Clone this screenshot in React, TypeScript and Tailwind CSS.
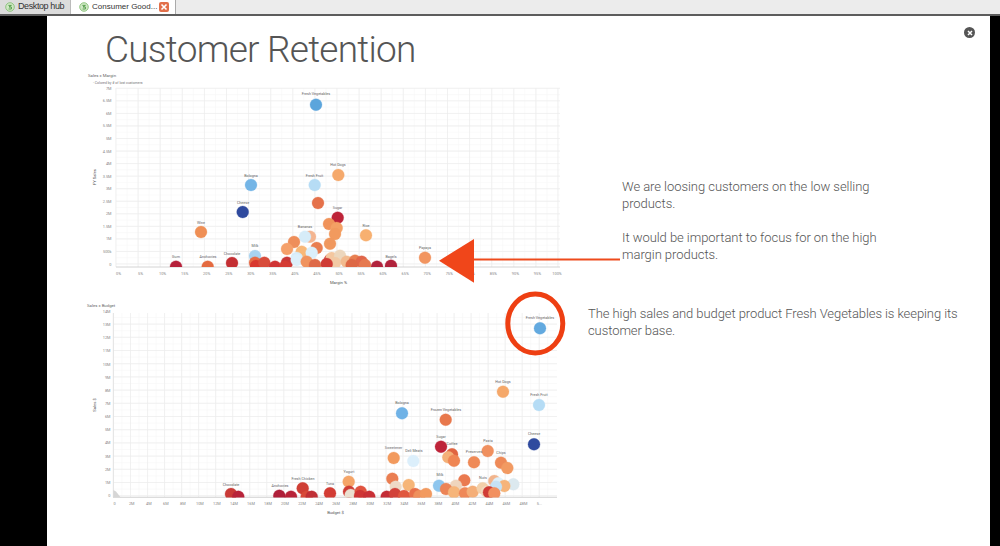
type B = [number, number, string, number?];
type L = [number, number, string];

const c1: B[] = [
  [316, 104.7, "#5ba5dc"], [251, 185, "#74b5e6"], [242.7, 212, "#2f4a9e"], [201, 232, "#ef8f55"], [314.7, 185, "#b6dcf5"],
  [338.3, 175, "#f5a96c"], [318, 203, "#e5714a"], [337.7, 217.7, "#bd2338"], [366, 235.3, "#f7b070"], [425, 257.7, "#f29560"],
  [377, 266.7, "#b1233c"], [391, 265.7, "#b1233c"],
  [329, 224, "#f0935a"], [336.7, 228, "#f4a064"], [335, 234, "#f29a5e"], [330, 243.7, "#f0985e"],
  [310, 236.7, "#f4b590"], [305, 236.7, "#d6ecf8"], [294, 242, "#ee8e5a"], [287, 249, "#f5a06a"], [316.7, 248, "#e97e50"],
  [301.7, 251.7, "#f8b878"], [311.7, 252.7, "#dbeffa"], [255, 256, "#a8d3f0"], [296.7, 258, "#d6ecf8"],
  [176, 266.7, "#b6203a"], [207.7, 266.7, "#e46a40"], [232, 263, "#c42f33"], [255, 262.7, "#e66a45"], [256, 266, "#d8382f"],
  [264.3, 262.7, "#d84c3b"], [275, 266.7, "#cf3434"], [287, 262.7, "#c83838"], [285, 266.7, "#d43c34"],
  [330, 260, "#cc3a33"], [331.7, 258, "#f4c79f"], [340, 255.7, "#ecd7bd"], [335, 263, "#f2c9a4"], [346.7, 261.7, "#f2bb8f"],
  [355, 260.7, "#e88052"], [361.7, 261.7, "#e0664a"], [351.7, 265, "#dd6845"], [365, 265, "#e67a50"], [326.7, 264, "#cf3c35"],
  [296.7, 260, "#dceffa"], [306.7, 261.7, "#f0935e"], [315, 265, "#de6a48"],
];
const l1: L[] = [
  [316, 95, "Fresh Vegetables"], [251, 176.5, "Bologna"], [243, 203.5, "Cheese"], [201, 223.5, "Wine"], [314.5, 176.5, "Fresh Fruit"],
  [338, 166, "Hot Dogs"], [337.5, 209, "Sugar"], [366, 226.5, "Rice"], [425, 249, "Papaya"], [391, 258, "Bagels"], [176, 258, "Gum"],
  [208, 258, "Anchovies"], [232, 254.5, "Chocolate"], [255, 247, "Milk"], [305, 228, "Bananas"],
];
const c2: B[] = [
  [231, 494, "#c93a36"], [238.3, 496.7, "#b8243a"], [279.3, 495.7, "#b0203a"], [291, 496.7, "#b92338"], [302.7, 488.3, "#cf3f35"],
  [306.7, 496.7, "#d84b3a"], [311.7, 496.7, "#c03036"], [330, 493.3, "#d33c34"],
  [540, 328.3, "#62a9df"], [503, 391.7, "#f5a86a"], [539, 405, "#b5dcf5"], [402, 413.3, "#6fb2e6"], [445.7, 419.7, "#e8784c"],
  [534, 444.3, "#2f4a9e"], [452, 454.3, "#e06440"], [441, 446.7, "#be2439"], [448.3, 457.3, "#f4b078"], [454, 460.7, "#ef8654"],
  [487.7, 451, "#f0905f"], [474, 462.3, "#ef8a57"], [501, 462.7, "#ee8a58"], [507.3, 468, "#f29a62"], [393.7, 458, "#f29a5e"],
  [413.3, 461, "#dceffb"], [348.7, 481.7, "#f5a568"], [392.3, 478.7, "#ea7e52"], [395.7, 486.7, "#eedac6"], [408.7, 485, "#f6b578"],
  [349, 491.7, "#cf3c35"], [350.7, 495, "#ebe0d0"], [360.7, 491.7, "#e0533f"], [360, 496, "#cf3535"], [369.3, 496.7, "#c93036"],
  [386.7, 496.7, "#c42c36"], [395, 494, "#d2423a"], [404, 496, "#e0583f"], [415, 494, "#e8704a"], [419.3, 496, "#ef905c"], [426, 494, "#f29a60"],
  [439, 485.7, "#8ec6ee"], [464.3, 480.3, "#ea7a50"], [456, 485.7, "#efd5bd"], [446, 489, "#ec8456"], [454, 492.3, "#f6b57a"], [465, 493.3, "#ef8858"], [472.7, 491.7, "#f4ae78"],
  [482.7, 488.3, "#f3cfa9"], [494.3, 481, "#f2b48c"], [498.3, 483.3, "#dff0fa"], [513.3, 484.3, "#dce9ef"], [504.3, 486, "#f6b47a"], [496, 486.7, "#c5e2f6"],
  [486.7, 491.7, "#f4d9bd"], [489, 492.3, "#d03c35"], [494.3, 493.3, "#f29060"],
];
const l2: L[] = [
  [231, 486, "Chocolate"], [280, 487, "Anchovies"], [303, 479.5, "Fresh Chicken"], [330, 485, "Tuna"], [349, 473, "Yogurt"],
  [540, 319, "Fresh Vegetables"], [503, 382.5, "Hot Dogs"], [539, 396, "Fresh Fruit"], [402, 404, "Bologna"], [446, 410.5, "Frozen Vegetables"],
  [534, 435, "Cheese"], [441, 438, "Sugar"], [452, 445, "Coffee"], [488, 441.5, "Pasta"], [474, 453, "Preserves"], [501, 453.5, "Chips"],
  [393.5, 448.5, "Sweetener"], [414, 451.5, "Deli Meats"], [440, 476, "Milk"], [483, 479, "Nuts"],
];
const x1 = ["0%", "5%", "10%", "15%", "20%", "25%", "30%", "35%", "40%", "45%", "50%", "55%", "60%", "65%", "70%", "75%", "80%", "85%", "90%", "95%", "100%"];
const y1 = ["0", "500k", "1M", "1.5M", "2M", "2.5M", "3M", "3.5M", "4M", "4.5M", "5M", "5.5M", "6M", "6.5M", "7M"];
const x2 = ["0", "2M", "4M", "6M", "8M", "10M", "12M", "14M", "16M", "18M", "20M", "22M", "24M", "26M", "28M", "30M", "32M", "34M", "36M", "38M", "40M", "42M", "44M", "46M", "48M", "5..."];
const y2 = ["0", "1M", "2M", "3M", "4M", "5M", "6M", "7M", "8M", "9M", "10M", "11M", "12M", "13M", "14M"];

const seq = (n: number) => Array.from({ length: n }, (_, i) => i);

function Bubbles({ data, labels }: { data: B[]; labels: L[] }) {
  return (
    <>
      {data.map(([x, y, f], i) => (
        <circle key={i} cx={x} cy={y} r={6} fill={f} stroke={f} strokeOpacity={0.5} strokeWidth={0.6} />
      ))}
      {labels.map(([x, y, t]) => (
        <text key={t} x={x} y={y} fontSize={3.7} fill="#666" textAnchor="middle">{t}</text>
      ))}
    </>
  );
}

function ChartOne() {
  const gx = (i: number) => 116 + 22.1 * i;
  const gy = (i: number) => 264 - 12.55 * i;
  return (
    <svg viewBox="80 70 490 220" className="w-[490px] h-[220px] shrink-0 [font-family:Roboto,sans-serif]">
      <defs><clipPath id="a"><rect x={116} y={88} width={444} height={179} /></clipPath></defs>
      {seq(41).map((i) => <line key={i} x1={116 + 11.05 * i} x2={116 + 11.05 * i} y1={88} y2={267} stroke="#f7f7f7" strokeWidth={0.6} />)}
      {seq(29).map((i) => <line key={i} x1={116} x2={560} y1={264 - 6.275 * i} y2={264 - 6.275 * i} stroke="#f7f7f7" strokeWidth={0.6} />)}
      {seq(21).map((i) => <line key={i} x1={gx(i)} x2={gx(i)} y1={88} y2={267} stroke="#ececec" strokeWidth={0.7} />)}
      {seq(15).map((i) => <line key={i} x1={116} x2={560} y1={gy(i)} y2={gy(i)} stroke="#ececec" strokeWidth={0.7} />)}
      <line x1={116} x2={560} y1={267} y2={267} stroke="#cfcfcf" strokeWidth={0.9} />
      <g clipPath="url(#a)"><Bubbles data={c1} labels={[]} /></g>
      <Bubbles data={[]} labels={l1} />
      {x1.map((t, i) => <text key={t} x={118.5 + 22.05 * i - (i === 20 ? 2.5 : 0)} y={275} fontSize={3.9} fill="#888" textAnchor="middle">{t}</text>)}
      {y1.map((t, i) => <text key={t} x={111.5} y={265.5 - 12.55 * i} fontSize={3.9} fill="#888" textAnchor="end">{t}</text>)}
      <text x={88} y={77} fontSize={4.3} fill="#666">Sales x Margin</text>
      <text x={93} y={83.5} fontSize={3.5} fill="#777">- Colored by # of lost customers</text>
      <text x={338.5} y={284} fontSize={4.2} fill="#555" textAnchor="middle">Margin %</text>
      <text x={0} y={0} fontSize={4.2} fill="#555" textAnchor="middle" transform="translate(95.5 177) rotate(-90)">FY Sales</text>
    </svg>
  );
}

function ChartTwo() {
  const gx = (i: number) => 113.5 + 17.03 * i;
  const gy = (i: number) => 495.7 - 13.2 * i;
  return (
    <svg viewBox="80 295 490 225" className="w-[490px] h-[225px] shrink-0 [font-family:Roboto,sans-serif]">
      <defs><clipPath id="b"><rect x={113} y={313} width={444} height={184.5} /></clipPath></defs>
      {seq(52).map((i) => <line key={i} x1={113.5 + 8.515 * i} x2={113.5 + 8.515 * i} y1={313} y2={497} stroke="#f7f7f7" strokeWidth={0.6} />)}
      {seq(28).map((i) => <line key={i} x1={113} x2={557} y1={495.7 - 6.6 * i} y2={495.7 - 6.6 * i} stroke="#f7f7f7" strokeWidth={0.6} />)}
      {seq(26).map((i) => <line key={i} x1={gx(i)} x2={gx(i)} y1={313} y2={497} stroke="#ececec" strokeWidth={0.7} />)}
      {seq(14).map((i) => <line key={i} x1={113} x2={557} y1={gy(i)} y2={gy(i)} stroke="#ececec" strokeWidth={0.7} />)}
      <line x1={113} x2={557} y1={497.3} y2={497.3} stroke="#cfcfcf" strokeWidth={0.9} />
      <line x1={113.3} x2={113.3} y1={313} y2={497.3} stroke="#e0e0e0" strokeWidth={0.8} />
      <path d="M113.3 497.3V490L116 491.5L118 494L120.5 497.3Z" fill="#d6d6d6" />
      <g clipPath="url(#b)"><Bubbles data={c2} labels={[]} /></g>
      <Bubbles data={[]} labels={l2} />
      {x2.map((t, i) => <text key={t} x={114.7 + 17.03 * i - (i === 25 ? 1 : 0)} y={505} fontSize={3.9} fill="#888" textAnchor="middle">{t}</text>)}
      {y2.map((t, i) => <text key={t} x={110.5} y={497 - 13.15 * i} fontSize={3.9} fill="#888" textAnchor="end">{t}</text>)}
      <text x={87} y={306.5} fontSize={4.3} fill="#666">Sales x Budget</text>
      <text x={335.5} y={514} fontSize={4.2} fill="#555" textAnchor="middle">Budget $</text>
      <text x={0} y={0} fontSize={4.2} fill="#555" textAnchor="middle" transform="translate(95.5 405) rotate(-90)">Sales $</text>
    </svg>
  );
}

function TabIcon() {
  return (
    <svg viewBox="0 0 10 10" className="w-[10px] h-[10px] shrink-0">
      <circle cx={5} cy={5} r={4.3} fill="#cfe8c4" stroke="#7dbb6c" strokeWidth={0.8} />
      <path d="M3.4 3.4H6.4L4 5H6.4V7H3.6" fill="none" stroke="#4f9a45" strokeWidth={0.9} />
    </svg>
  );
}

export default function App() {
  return (
    <div className="w-[1000px] h-[546px] overflow-hidden flex flex-col bg-black">
      <div className="h-[16px] shrink-0 flex items-stretch bg-[#ececec] border-b-2 border-[#5c5c5c] text-[9px] text-[#333] [font-family:'Liberation_Sans',sans-serif] whitespace-nowrap">
        <div className="w-[71px] flex items-center gap-[3px] pl-[5px] bg-[#dcdcdc] border-r border-[#bbbbbb]">
          <TabIcon />
          <span className="tracking-[-0.4px]">Desktop hub</span>
        </div>
        <div className="w-[105px] flex items-center gap-[3px] pl-[8px] bg-white border-r border-[#aaaaaa]">
          <TabIcon />
          <span className="w-[63px] text-[8px]">Consumer Good...</span>
          <span className="ml-[1px] w-[10px] h-[10px] rounded-[2px] bg-[#e2704a] flex items-center justify-center">
            <svg viewBox="0 0 8 8" className="w-[8px] h-[8px]"><path d="M1.5 1.5L6.5 6.5M6.5 1.5L1.5 6.5" stroke="#fff" strokeWidth={1.6} /></svg>
          </span>
        </div>
      </div>
      <div className="flex-1 pl-[47px] pr-[10px]">
        <main className="relative h-full bg-white [font-family:Roboto,sans-serif]">
          <h1 className="h-[54px] pl-[58px] pt-[12px] text-[37px] leading-[43px] font-light tracking-[-0.75px] text-[#555555]">Customer Retention</h1>
          <section className="flex pl-[33px] h-[220px]">
            <ChartOne />
            <div className="ml-[52px] pt-[108px] w-[270px] text-[13px] leading-[17px] tracking-[-0.05px] font-light text-[#555555]">
              <p className="mb-[17px]">We are loosing customers on the low selling products.</p>
              <p>It would be important to focus for on the high margin products.</p>
            </div>
          </section>
          <section className="flex pl-[33px] mt-[5px]">
            <ChartTwo />
            <div className="ml-[18px] pt-[10px] w-[375px] text-[13px] leading-[17px] tracking-[-0.08px] font-light text-[#555555]">
              <p>The high sales and budget product Fresh Vegetables is keeping its customer base.</p>
            </div>
          </section>
          <svg viewBox="47 16 943 530" className="absolute inset-0 w-full h-full pointer-events-none">
            <path d="M474 258.5H620V260.5H474Z" fill="#ee4a1c" />
            <path d="M439 260.7L474 239V282.7Z" fill="#f0461a" />
            <ellipse cx={535.3} cy={323.5} rx={27.5} ry={29.5} fill="none" stroke="#ee3f12" strokeWidth={5} />
          </svg>
          <span className="absolute left-[917px] top-[11px] w-[11px] h-[11px] rounded-full bg-[#555555] flex items-center justify-center">
            <svg viewBox="0 0 8 8" className="w-[8px] h-[8px]"><path d="M2 2L6 6M6 2L2 6" stroke="#fff" strokeWidth={1.5} /></svg>
          </span>
        </main>
      </div>
    </div>
  );
}
